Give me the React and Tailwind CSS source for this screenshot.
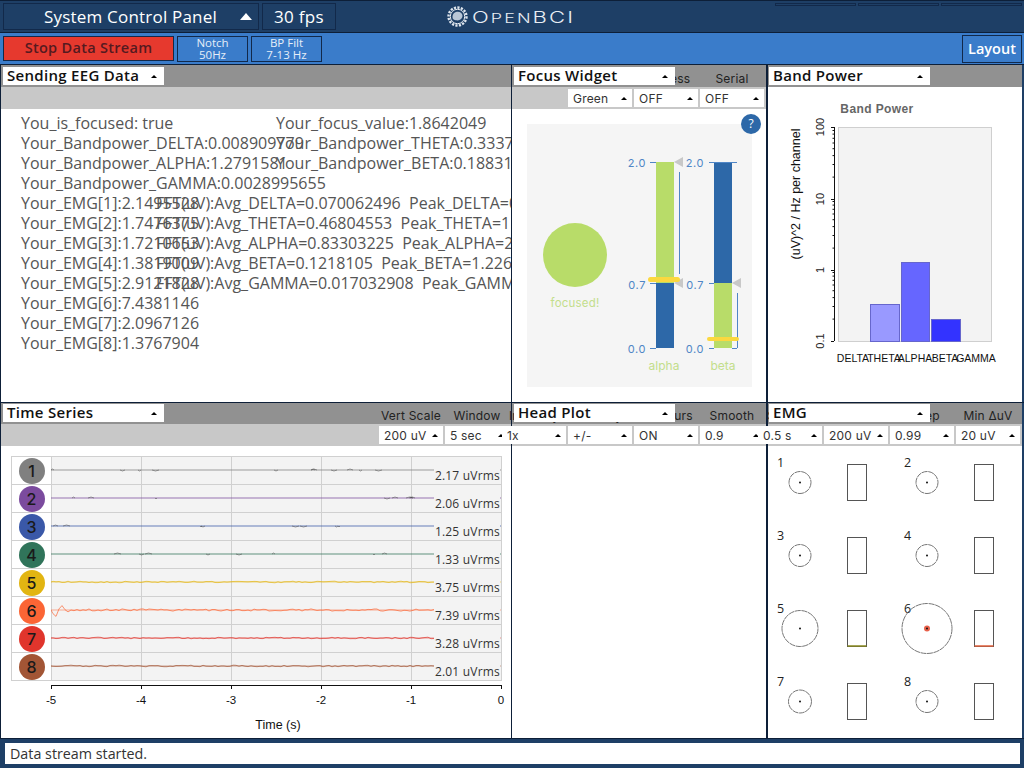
import React from "react";

const channels = [
  { n: 1, color: "#808080", rms: "2.17 uVrms", wave: false, seed: 3 },
  { n: 2, color: "#7b4b9e", rms: "2.06 uVrms", wave: false, seed: 11 },
  { n: 3, color: "#3a58a8", rms: "1.25 uVrms", wave: false, seed: 23 },
  { n: 4, color: "#30745a", rms: "1.33 uVrms", wave: false, seed: 37 },
  { n: 5, color: "#e2b512", rms: "3.75 uVrms", wave: true, seed: 41 },
  { n: 6, color: "#fb6535", rms: "7.39 uVrms", wave: true, seed: 53 },
  { n: 7, color: "#e0352c", rms: "3.28 uVrms", wave: true, seed: 67 },
  { n: 8, color: "#a25535", rms: "2.01 uVrms", wave: true, seed: 79 },
];

const textRows = [
  ["You_is_focused: true", "Your_focus_value:1.8642049"],
  ["Your_Bandpower_DELTA:0.008909779", "Your_Bandpower_THETA:0.33371234"],
  ["Your_Bandpower_ALPHA:1.2791581", "Your_Bandpower_BETA:0.18831027"],
  ["Your_Bandpower_GAMMA:0.0028995655", ""],
  ["Your_EMG[1]:2.1495528", "FFT(uV):Avg_DELTA=0.070062496  Peak_DELTA=0.2134"],
  ["Your_EMG[2]:1.7476375", "FFT(uV):Avg_THETA=0.46804553  Peak_THETA=1.0921"],
  ["Your_EMG[3]:1.7210653", "FFT(uV):Avg_ALPHA=0.83303225  Peak_ALPHA=2.1187"],
  ["Your_EMG[4]:1.3819009", "FFT(uV):Avg_BETA=0.1218105  Peak_BETA=1.2264"],
  ["Your_EMG[5]:2.9121828", "FFT(uV):Avg_GAMMA=0.017032908  Peak_GAMMA=0.1"],
  ["Your_EMG[6]:7.4381146", ""],
  ["Your_EMG[7]:2.0967126", ""],
  ["Your_EMG[8]:1.3767904", ""],
];

const emg = [
  { n: 1, r: 11 },
  { n: 2, r: 11 },
  { n: 3, r: 11 },
  { n: 4, r: 11 },
  { n: 5, r: 18, bar: "#8a8a20" },
  { n: 6, r: 25, dot: true, bar: "#e0603c" },
  { n: 7, r: 11.5 },
  { n: 8, r: 11 },
];

function rng(seed) {
  let s = seed;
  return () => {
    s = (s * 16807) % 2147483647;
    return (s % 1000) / 1000;
  };
}

// wavy trace for the noisy channels, mostly flat with little blips for the rest
function tracePath(ch) {
  const r = rng(ch.seed * 977 + 5);
  let d = "M0 13";
  for (let x = 2; x <= 450; x += 3) {
    let y = 13 + (r() - 0.5) * (ch.n === 6 ? 2.2 : 1.6);
    if (ch.n === 6 && x < 20) y = 13 + Math.sin((x - 1) / 2.1) * (22 - x) * 0.4;
    d += ` L${x} ${y.toFixed(1)}`;
  }
  return d;
}

function blips(ch) {
  const r = rng(ch.seed * 331 + 7);
  const out = [];
  for (let i = 0; i < 12; i++) {
    const x = Math.floor(r() * 440);
    const w = 2 + Math.floor(r() * 6);
    out.push(`M${x} 13 L${x + w / 2} ${r() > 0.5 ? 12 : 14} L${x + w} 13`);
  }
  return out.join(" ");
}

function Dropdown({ label, className }) {
  return (
    <div className={`h-[18px] bg-white flex items-center justify-between ${className}`}>
      <span className="font-['Inter'] text-[12px] leading-[14px] pt-px tracking-[0.2px] text-[#333] whitespace-nowrap">{label}</span>
      <span className="w-0 h-0 border-l-[3px] border-r-[3px] border-b-[3px] border-l-transparent border-r-transparent border-b-black" />
    </div>
  );
}

function WidgetHeader({ title, controls, titleLeft, top, noBar }) {
  return (
    <>
      <div className={`${top ? "h-[22px]" : "h-[21px]"} bg-[#919191] flex justify-end items-end gap-[2px] pr-[2px] pb-px`}>
        {controls.map((c) => (
          <div key={c.label} className="w-[64px] shrink-0 flex justify-center">
            <span className="font-['Inter'] text-[12px] leading-[14px] tracking-[0.2px] text-[#222] whitespace-nowrap">{c.label}</span>
          </div>
        ))}
      </div>
      {!noBar && (
        <div className="h-[22px] bg-[#c8c8c8] flex justify-end items-center gap-[2px] pr-[2px] relative z-10">
          {controls.map((c) => (
            <Dropdown key={c.label} label={c.value} className="w-[64px] shrink-0 pl-[5px] pr-[5px]" />
          ))}
        </div>
      )}
      <div className={`absolute z-20 w-[161px] h-[18px] bg-white flex items-center justify-between pl-1 pr-[7px] ${top ? "top-[2px]" : "top-px"} ${titleLeft}`}>
        <span className="font-['Open_Sans'] font-semibold text-[15px] leading-[18px] pb-[2px] tracking-[0.3px] text-[#111] whitespace-nowrap">{title}</span>
        <span className="w-0 h-0 border-l-[3px] border-r-[3px] border-b-[3px] border-l-transparent border-r-transparent border-b-black" />
      </div>
    </>
  );
}

function FocusChart() {
  const blue = "#2d68a8";
  const green = "#b8dc69";
  const tickText = "font-['Inter'] text-[11px] tracking-[0.6px] fill-[#4f86c6]";
  return (
    <svg width="225" height="263" className="block">
      <circle cx="48" cy="131" r="32" fill={green} />
      <text x="48" y="183" textAnchor="middle" className="font-['Inter'] text-[11.5px] tracking-[0.2px] fill-[#c3de8c]">focused!</text>

      <rect x="129" y="38" width="18" height="121" fill={green} />
      <rect x="129" y="159" width="18" height="65" fill={blue} />
      <rect x="187" y="38" width="18" height="121" fill={blue} />
      <rect x="187" y="159" width="18" height="65" fill={green} />

      <g stroke="#4f86c6" strokeWidth="1">
        <path d="M123 38.5H129M123 159.5H129M123 224.5H129" />
        <path d="M182 38.5H210M182 159.5H187M182 224.5H187M205 224.5H210" />
        <path d="M152.5 48V150M210.5 169V224" />
      </g>

      <polygon points="147,38 156,33 156,43" fill="#c8c8c8" />
      <polygon points="147,159 156,154 156,164" fill="#c8c8c8" />
      <polygon points="205,159 214,154 214,164" fill="#c8c8c8" />

      <rect x="121" y="153" width="32" height="5" rx="2.5" fill="#fbd83f" />
      <rect x="180" y="213" width="32" height="4" rx="2" fill="#fbd83f" />

      {[["2.0", 43], ["0.7", 165], ["0.0", 229]].map(([t, y]) => (
        <g key={t}>
          <text x="119" y={y} textAnchor="end" className={tickText}>{t}</text>
          <text x="177" y={y} textAnchor="end" className={tickText}>{t}</text>
        </g>
      ))}
      <text x="137" y="246" textAnchor="middle" className="font-['Inter'] text-[12px] fill-[#c3de8c]">alpha</text>
      <text x="196" y="246" textAnchor="middle" className="font-['Inter'] text-[12px] fill-[#c3de8c]">beta</text>
    </svg>
  );
}

function BandPowerChart() {
  // origin of this svg is x=768, y=87 on the page
  const axis = "font-['Liberation_Sans'] text-[10.5px] fill-[#111]";
  const minor = [0.3, 0.477, 0.602, 0.699, 0.778, 0.845, 0.903, 0.954];
  const decades = [254, 183, 112];
  return (
    <svg width="254" height="315" className="block">
      <text x="109" y="26" textAnchor="middle" className="font-['Liberation_Sans'] font-bold text-[12px] fill-[#666] tracking-[0.4px]">Band Power</text>
      <rect x="70.5" y="40.5" width="153" height="214" fill="#f3f3f3" stroke="#cfcfcf" />
      <rect x="102.5" y="217.5" width="29" height="37" fill="#9999ff" stroke="#6666cc" />
      <rect x="133.5" y="175.5" width="28" height="79" fill="#6666ff" stroke="#6666cc" />
      <rect x="163.5" y="232.5" width="29" height="22" fill="#3333ff" stroke="#6666cc" />
      <path d="M66.5 40V254M63 254.5H66M63 183.5H66M63 112.5H66M63 40.5H66" stroke="#111" fill="none" />
      {decades.map((y) =>
        minor.map((m) => (
          <path key={`${y}-${m}`} d={`M64.5 ${(y - m * 71.3).toFixed(1) - 0.5}H66`} stroke="#111" />
        ))
      )}
      {[["0.1", 254], ["1", 183], ["10", 112], ["100", 40]].map(([t, y]) => (
        <text key={t} transform={`translate(56 ${y}) rotate(-90)`} textAnchor="middle" className="font-['Liberation_Sans'] text-[11px] fill-[#222]">{t}</text>
      ))}
      <text transform="translate(32 107) rotate(-90)" textAnchor="middle" className="font-['Liberation_Sans'] text-[12.5px] fill-[#111]">(uV)^2 / Hz per channel</text>
      {[["DELTA", 85], ["THETA", 116], ["ALPHA", 147], ["BETA", 177], ["GAMMA", 208]].map(([t, x]) => (
        <text key={t} x={x} y="275" textAnchor="middle" className={axis}>{t}</text>
      ))}
    </svg>
  );
}

function EmgCell({ ch }) {
  return (
    <svg width="127" height="73" className="block overflow-visible">
      <text x="8" y="21" className="font-['Open_Sans'] text-[12.5px] fill-[#222]">{ch.n}</text>
      <circle cx="31" cy="36.5" r={ch.r} fill="none" stroke="#777" strokeDasharray="6 0.6" />
      {ch.dot && <circle cx="31" cy="36.5" r="3" fill="#e8604a" />}
      <circle cx="31" cy="36.5" r="1" fill="#111" />
      <rect x="78.5" y="18.5" width="19" height="36" fill="none" stroke="#555" />
      {ch.bar && <path d="M78.5 54H97.5" stroke={ch.bar} strokeWidth="1.5" />}
    </svg>
  );
}

function TimeSeries() {
  return (
    <div className="pl-[10px] pt-[10px]">
      <div className="w-[491px] border-t border-[#d0d0d0]">
        {channels.map((ch) => (
          <div key={ch.n} className="flex h-[28px] border-b border-[#d0d0d0]">
            <div className="w-[40px] flex items-center justify-center border-l border-[#d0d0d0]">
              <div className="w-[26px] h-[26px] rounded-full flex items-center justify-center" style={{ backgroundColor: ch.color }}>
                <span className="font-['Inter'] font-medium text-[16px] text-[#1a1a1a]">{ch.n}</span>
              </div>
            </div>
            <div className="relative w-[451px] bg-[#f3f3f3]">
              <svg width="451" height="27" className="block">
                {[0, 90, 180, 270, 360, 450].map((x) => (
                  <path key={x} d={`M${x + 0.5} 0V28`} stroke="#d0d0d0" />
                ))}
                {ch.wave ? (
                  <>
                    <path d="M0 13H450" stroke={ch.color} strokeOpacity="0.25" strokeWidth="2" />
                    <path d={tracePath(ch)} fill="none" stroke={ch.color} strokeWidth="0.7" />
                  </>
                ) : (
                  <>
                    <path d="M0 13H450" stroke={ch.color} strokeOpacity="0.5" strokeWidth="1.4" />
                    <path d={blips(ch)} fill="none" stroke="#444" strokeWidth="0.5" />
                  </>
                )}
              </svg>
              <span className="absolute right-[2px] top-[11px] h-[16px] pl-px bg-[#f3f3f3] font-['Open_Sans'] text-[12px] leading-[16px] tracking-[0.2px] text-[#333] whitespace-nowrap">{ch.rms}</span>
            </div>
          </div>
        ))}
      </div>
      <div className="ml-[40px]">
        <svg width="451" height="56" className="block overflow-visible">
          <path d="M0.5 4.5H450.5" stroke="#111" />
          {[["-5", 0], ["-4", 90], ["-3", 180], ["-2", 270], ["-1", 360], ["0", 450]].map(([t, x]) => (
            <g key={t}>
              <path d={`M${x + 0.5} 4V8`} stroke="#111" />
              <text x={x} y="23" textAnchor="middle" className="font-['Liberation_Sans'] text-[11.5px] fill-[#111]">{t}</text>
            </g>
          ))}
          <text x="227" y="48" textAnchor="middle" className="font-['Liberation_Sans'] text-[12.5px] fill-[#111]">Time (s)</text>
        </svg>
      </div>
    </div>
  );
}

export default function App() {
  return (
    <div className="w-[1024px] h-[768px] overflow-hidden flex flex-col bg-[#1e3f66] font-['Open_Sans']">
      {/* top bar */}
      <div className="relative h-[33px] shrink-0 flex items-start gap-[3px] pl-[3px] pt-[2px] border-t border-b border-[#0d1f38] bg-[#1e3f66]">
        <div className="w-[256px] h-[27px] border border-[#12294a] flex items-center pl-[40px] pr-[6px] justify-between">
          <span className="text-[17px] tracking-[0.2px] text-white whitespace-nowrap">System Control Panel</span>
          <span className="w-0 h-0 border-l-[6.5px] border-r-[6.5px] border-b-[7px] border-l-transparent border-r-transparent border-b-white" />
        </div>
        <div className="w-[74px] h-[27px] border border-[#12294a] flex items-center justify-center">
          <span className="text-[17px] tracking-[0.3px] text-white whitespace-nowrap">30 fps</span>
        </div>
        <div className="absolute left-[447px] top-[5px] flex items-center gap-[4px]">
          <svg width="21" height="21" viewBox="0 0 21 21">
            <circle cx="10.5" cy="10.5" r="9" fill="none" stroke="#dfe6ee" strokeWidth="2.4" strokeDasharray="2.2 1.3" />
            <circle cx="10.5" cy="10.5" r="7.2" fill="#1e3f66" stroke="#e6ebf1" strokeWidth="1" />
            <path d="M5.5 11c0-3.4 2.6-5.2 5.4-5.2 2.6 0 4.6 1.8 4.6 4 0 2.6-2.2 4.6-5 4.6-2.6 0-5-.8-5-3.4z" fill="#b9c6d6" />
          </svg>
          <span className="inline-block origin-left scale-x-[1.38] font-['Inter'] font-light text-[13px] leading-none tracking-[1.5px] text-[#e8edf3] whitespace-nowrap"><span className="text-[16px]">O</span>PEN<span className="text-[16px]">BCI</span></span>
        </div>
        <div className="absolute right-[2px] top-[2px] flex gap-[2px]">
          {[0, 1, 2].map((i) => (
            <div key={i} className="w-[81px] h-[3px] border border-[#12294a]" />
          ))}
        </div>
      </div>

      {/* second bar */}
      <div className="h-[31px] shrink-0 bg-[#3a7cca] flex items-center gap-[3px] pl-[3px] pr-[2px]">
        <div className="w-[171px] h-[25px] bg-[#e6392e] border border-[#12294a] flex items-center justify-center">
          <span className="text-[14.5px] leading-[18px] pb-[2px] font-semibold tracking-[0.3px] text-[#551a20] whitespace-nowrap">Stop Data Stream</span>
        </div>
        {[["Notch", "50Hz"], ["BP Filt", "7-13 Hz"]].map(([a, b]) => (
          <div key={a} className="w-[71px] h-[26px] border border-[#12294a] flex flex-col items-center justify-center">
            <span className="text-[11.5px] leading-[12px] text-[#e6eef8]">{a}</span>
            <span className="text-[11.5px] leading-[12px] text-[#e6eef8]">{b}</span>
          </div>
        ))}
        <div className="ml-auto w-[60px] h-[28px] border border-[#12294a] flex items-center justify-center">
          <span className="text-[14.5px] font-semibold text-white">Layout</span>
        </div>
      </div>

      {/* top widgets */}
      <div className="h-[338px] shrink-0 flex border-t border-[#0d1f38]">
        <div className="relative w-[512px] border-l border-r border-[#0d1f38] bg-white overflow-hidden">
          <WidgetHeader top title="Sending EEG Data" controls={[]} titleLeft="left-[2px]" />
          <div className="pl-[20px] pt-[4px] text-[16px] leading-[20px] text-[#555]">
            {textRows.map(([a, b]) => (
              <div key={a} className="flex whitespace-nowrap">
                <span className={`shrink-0 ${b.startsWith("FFT") ? "w-[135px]" : "w-[255px]"}`}>{a}</span>
                <span className="whitespace-pre">{b}</span>
              </div>
            ))}
          </div>
        </div>
        <div className="relative w-[256px] border-r-2 border-[#0d1f38] bg-white">
          <WidgetHeader
            top
            title="Focus Widget"
            titleLeft="left-[2px]"
            controls={[
              { label: "Theme", value: "Green" },
              { label: "Harness", value: "OFF" },
              { label: "Serial", value: "OFF" },
            ]}
          />
          <div className="pl-[15px] pt-[15px]">
            <div className="w-[225px] h-[263px] bg-[#f5f5f5]">
              <FocusChart />
            </div>
          </div>
          <div className="absolute left-[229px] top-[49px] w-[20px] h-[20px] rounded-full bg-[#2d68a8] flex items-center justify-center">
            <span className="text-[12px] text-white">?</span>
          </div>
        </div>
        <div className="relative w-[254px] bg-white">
          <WidgetHeader top noBar title="Band Power" controls={[]} titleLeft="left-px" />
          <BandPowerChart />
        </div>
      </div>

      {/* bottom widgets */}
      <div className="h-[336px] shrink-0 flex border-t border-[#0d1f38]">
        <div className="relative w-[512px] border-l border-r border-[#0d1f38] bg-white">
          <WidgetHeader
            title="Time Series"
            titleLeft="left-[2px]"
            controls={[
              { label: "Vert Scale", value: "200 uV" },
              { label: "Window", value: "5 sec" },
            ]}
          />
          <TimeSeries />
        </div>
        <div className="relative w-[256px] border-r-2 border-[#0d1f38] bg-white">
          <WidgetHeader
            title="Head Plot"
            titleLeft="left-[2px]"
            controls={[
              { label: "Intensity", value: "1x" },
              { label: "Polarity", value: "+/-" },
              { label: "Contours", value: "ON" },
              { label: "Smooth", value: "0.9" },
            ]}
          />
        </div>
        <div className="relative w-[254px] bg-white">
          <WidgetHeader
            title="EMG"
            titleLeft="left-px"
            controls={[
              { label: "Smooth", value: "0.5 s" },
              { label: "uV Limit", value: "200 uV" },
              { label: "Creep", value: "0.99" },
              { label: "Min ΔuV", value: "20 uV" },
            ]}
          />
          <div className="grid grid-cols-[127px_127px] pl-px">
            {emg.map((ch) => (
              <EmgCell key={ch.n} ch={ch} />
            ))}
          </div>
        </div>
      </div>

      {/* status bar */}
      <div className="flex-1 px-[5px] pt-[4px] border-t border-[#0d1f38]">
        <div className="w-[1015px] h-[21px] bg-white pl-[5px] flex items-center">
          <span className="text-[14.3px] text-[#333]">Data stream started.</span>
        </div>
      </div>
    </div>
  );
}
